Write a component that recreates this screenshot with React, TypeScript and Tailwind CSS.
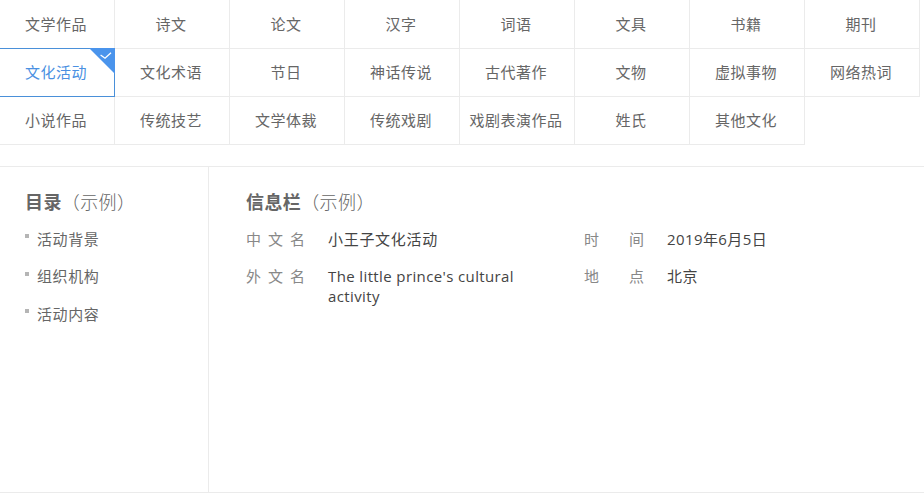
const rows = [
  ["文学作品", "诗文", "论文", "汉字", "词语", "文具", "书籍", "期刊"],
  ["文化活动", "文化术语", "节日", "神话传说", "古代著作", "文物", "虚拟事物", "网络热词"],
  ["小说作品", "传统技艺", "文学体裁", "传统戏剧", "戏剧表演作品", "姓氏", "其他文化"],
];
const font = "font-['Open_Sans','Noto_Sans_CJK_SC',sans-serif]";

function Cell({ label, active, first }: { label: string; active: boolean; first: boolean }) {
  return (
    <div
      className={
        active
          ? "relative -mt-px flex h-[49px] w-[115px] items-center justify-center border border-l-0 border-[#4a90d9] pr-[2px] text-[15px] tracking-[0.5px] text-[#4a90e2]"
          : first
            ? "flex h-[49px] w-[115px] items-center justify-center border-r border-b border-[#ebebeb] pr-[2px] text-[15px] tracking-[0.5px] text-[#666666]"
            : "flex h-[48px] w-[115px] items-center justify-center border-r border-b border-[#ebebeb] pr-[2px] text-[15px] tracking-[0.5px] text-[#666666]"
      }
    >
      {label}
      {active && (
        <svg className="absolute -right-px -top-px" width="26" height="26" viewBox="0 0 26 26">
          <path d="M0 0H26V26Z" fill="#4a94ec" />
          <path d="M11.6 7L16 10.2L22 4.7" fill="none" stroke="#ffffff" strokeWidth="1.3" />
        </svg>
      )}
    </div>
  );
}

function SpreadLabel({ text }: { text: string }) {
  return (
    <span className="mr-[23px] flex w-[60px] shrink-0 justify-between text-[#888888]">
      {text.split("").map((c) => (
        <span key={c}>{c}</span>
      ))}
    </span>
  );
}

export default function App() {
  return (
    <div className={`h-[496px] w-[924px] overflow-hidden bg-white ${font}`}>
      <div className="h-[167px] border-b border-[#ebebeb]">
        {rows.map((row, i) => (
          <div key={i} className="flex">
            {row.map((label, j) => (
              <Cell key={label} label={label} active={i === 1 && j === 0} first={i === 0} />
            ))}
          </div>
        ))}
      </div>
      <div className="flex h-[326px] border-b border-[#ebebeb]">
        <div className="w-[209px] shrink-0 border-r border-[#ebebeb] pl-[25px] pt-[22px]">
          <h2 className="mb-[5px] flex h-[26px] items-center text-[18px] tracking-[0.4px] text-[#666666]">
            <b className="font-bold">目录</b>
            <span className="font-light">（示例）</span>
          </h2>
          {["活动背景", "组织机构", "活动内容"].map((t) => (
            <div key={t} className="flex h-[37.5px] items-center text-[15px] tracking-[0.6px] text-[#666666]">
              <span className="mb-[5px] mr-[8px] h-[4px] w-[4px] bg-[#b5b5b5]" />
              {t}
            </div>
          ))}
        </div>
        <div className="flex-1 pl-[37px] pt-[22px]">
          <h2 className="mb-[14px] flex h-[26px] items-center text-[18px] tracking-[0.4px] text-[#666666]">
            <b className="font-bold">信息栏</b>
            <span className="font-light">（示例）</span>
          </h2>
          <div className="flex">
            <div className="w-[338px]">
              <div className="flex pb-[17px] text-[15px] leading-[20px]">
                <span className="w-[82px] shrink-0 tracking-[7px] text-[#888888]">中文名</span>
                <span className="w-[200px] tracking-[0.7px] text-[#444444]">小王子文化活动</span>
              </div>
              <div className="flex text-[15px] leading-[20px]">
                <span className="w-[82px] shrink-0 tracking-[7px] text-[#888888]">外文名</span>
                <span className="w-[200px] tracking-[0.38px] text-[#444444]">The little prince's cultural activity</span>
              </div>
            </div>
            <div>
              <div className="flex pb-[17px] text-[15px] leading-[20px]">
                <SpreadLabel text="时间" />
                <span className="tracking-[0.4px] text-[#444444]">2019年6月5日</span>
              </div>
              <div className="flex text-[15px] leading-[20px]">
                <SpreadLabel text="地点" />
                <span className="tracking-[0.5px] text-[#444444]">北京</span>
              </div>
            </div>
          </div>
        </div>
      </div>
    </div>
  );
}
